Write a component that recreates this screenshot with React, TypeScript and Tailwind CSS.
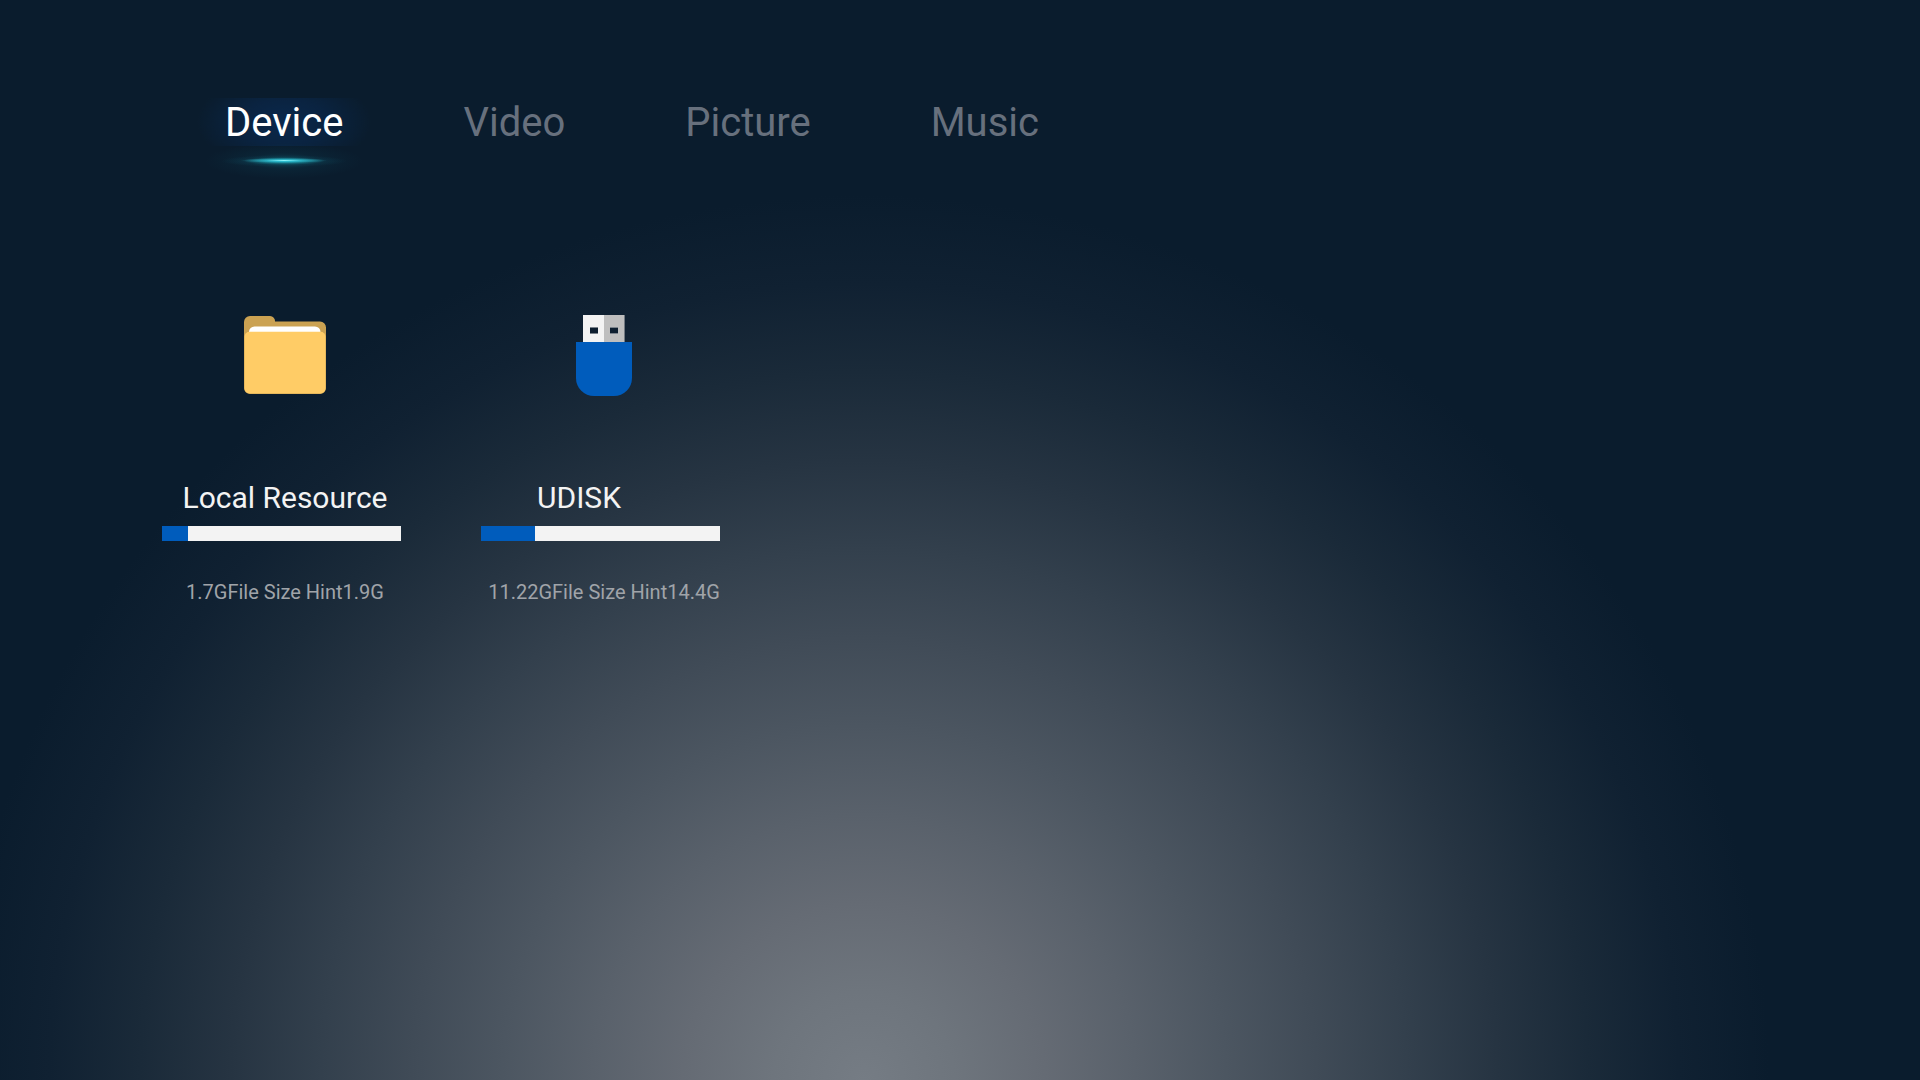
const tabs = ["Device", "Video", "Picture", "Music"];

function FolderIcon() {
  return (
    <svg viewBox="0 0 82 78" className="h-[78px] w-[82px]" aria-hidden="true">
      <path d="M0 6a6 6 0 0 1 6-6H26a5 5 0 0 1 5 5.500H76a6 6 0 0 1 6 6V72a6 6 0 0 1-6 6H6a6 6 0 0 1-6-6Z" fill="#cba252" />
      <path d="M5 18V16a5.500 5.500 0 0 1 5.500-5.500H71a5.500 5.500 0 0 1 5.500 5.500V18Z" fill="#fff" />
      <rect x="0.500" y="15.700" width="81" height="61.800" rx="5" fill="#ffcc66" />
    </svg>
  );
}

function UsbIcon() {
  return (
    <svg viewBox="0 0 56 81" className="h-[81px] w-[56px]" aria-hidden="true">
      <path d="M7 0H28V27H7Z" fill="#f3f3f3" />
      <path d="M28 0H48V27H28Z" fill="#bebebe" />
      <path d="M48 0h1V27h-1Z" fill="#727981" />
      <path d="M14 12h8v7h-8ZM34 12h8v7h-8Z" fill="#7b838b" />
      <path d="M14 13h8v5h-8ZM34 13h8v5h-8Z" fill="#0e1f30" />
      <path d="M0 27H56V63A18 18 0 0 1 38 81H18A18 18 0 0 1 0 63Z" fill="#005cbc" />
    </svg>
  );
}

const devices = [
  { name: "Local Resource", info: "1.7GFile Size Hint1.9G", used: 26, total: 239, icon: <FolderIcon />, inset: "" },
  { name: "UDISK", info: "11.22GFile Size Hint14.4G", used: 54, total: 239, icon: <UsbIcon />, inset: "pr-[50px]" },
];

export default function App() {
  return (
    <main className="min-h-screen bg-[#0a1c2d] bg-[radial-gradient(905px_885px_at_45%_100%,#757c84_0%,#6e757d_10%,#656b74_20%,#59616b_30%,#4c5661_40%,#404b57_50%,#33404d_60%,#263442_70%,#1a2a39_80%,#102132_90%,#0a1c2d_100%)] font-['Roboto',sans-serif]">
      <nav className="flex gap-[120px] pt-[99px] pl-[225px]">
        {tabs.map((tab, i) => (
          <button
            key={tab}
            type="button"
            aria-current={i === 0 ? "page" : undefined}
            className={
              i === 0
                ? "relative text-[40px] leading-[48px] text-white"
                : "text-[40px] leading-[48px] text-[#67707d]"
            }
          >
            {i === 0 && (
              <>
                <span className="absolute -inset-x-7 -top-px h-12 bg-[radial-gradient(closest-side,#0a284c,#0a2545cc_50%,#0a1c2d00)] bg-[length:100%_200%] bg-center" />
                <span className="absolute -inset-x-5 top-[44px] h-[36px] bg-[radial-gradient(closest-side,#16809055,#0f506428_45%,#0a1c2d00)]" />
                <span className="absolute -inset-x-1 top-[56px] h-[12px] bg-[radial-gradient(closest-side,#1fb4c8,#1790a099_35%,#0f506440_65%,#0a1c2d00)]" />
                <span className="absolute inset-x-4 top-[59px] h-[5px] bg-[radial-gradient(closest-side,#8af4fa,#35c8daaa_40%,#1ba8be00)]" />
              </>
            )}
            <span className="relative">{tab}</span>
          </button>
        ))}
      </nav>

      <ul className="flex gap-[73px] pt-[166px] pl-[162px]">
        {devices.map((d) => (
          <li key={d.name} className="flex w-[246px] flex-col items-center">
            <div className="flex h-[84px] items-center">{d.icon}</div>
            <div className={`mt-[83px] flex h-9 w-full items-center justify-center ${d.inset}`}>
              <h2 className="text-[30px] leading-9 whitespace-nowrap text-[#f3f3f3]">{d.name}</h2>
            </div>
            <div
              role="progressbar"
              aria-label={d.name}
              aria-valuenow={d.used}
              aria-valuemax={d.total}
              className="mt-[10px] h-[15px] w-[239px] self-start bg-[#f3f3f3]"
            >
              <div className="h-full bg-[#005cbc]" style={{ width: `${(d.used / d.total) * 100}%` }} />
            </div>
            <p className="mt-[39px] text-[20px] leading-6 whitespace-nowrap text-[#a0a4a9]">{d.info}</p>
          </li>
        ))}
      </ul>
    </main>
  );
}
